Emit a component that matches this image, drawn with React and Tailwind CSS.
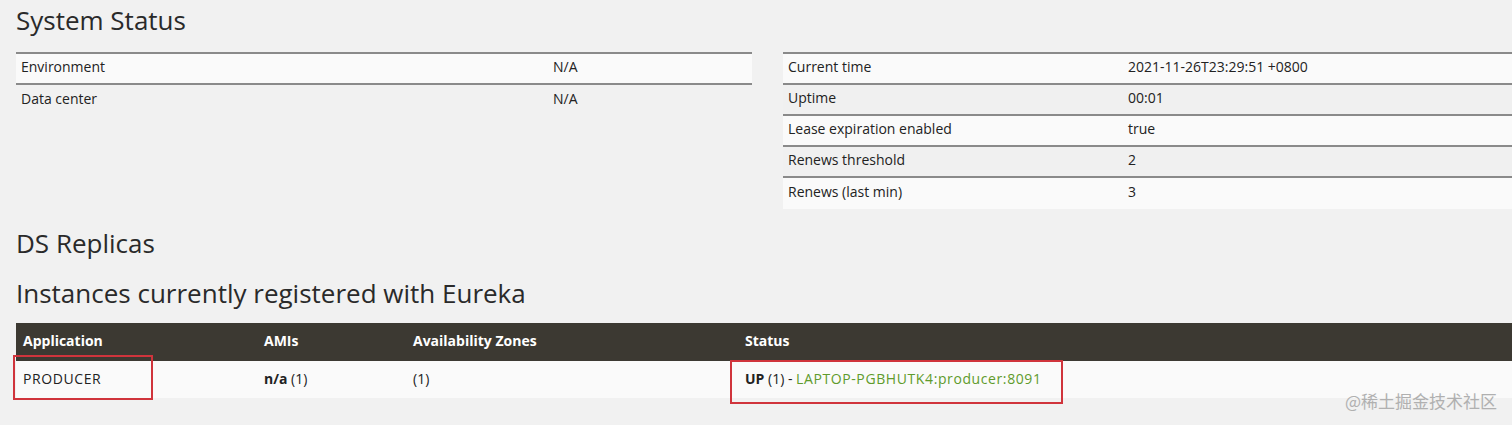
import React from 'react';

const leftRows = [
  ['Environment', 'N/A'],
  ['Data center', 'N/A'],
];

const rightRows = [
  ['Current time', '2021-11-26T23:29:51 +0800'],
  ['Uptime', '00:01'],
  ['Lease expiration enabled', 'true'],
  ['Renews threshold', '2'],
  ['Renews (last min)', '3'],
];

function StatusTable({ rows, labelWidth, striped }) {
  return (
    <div className="border-t-2 border-[#8a8a8a]">
      {rows.map(([k, v], i) => (
        <div
          key={k}
          className={`flex h-[31px] items-center pb-[5px] ${i < rows.length - 1 ? 'border-b-2 border-[#8a8a8a]' : ''} ${
            i % 2 === 0 ? 'bg-[#fafafa]' : striped ? 'bg-[#f0f0f0]' : ''
          }`}
        >
          <div className={`${labelWidth} shrink-0 pl-[5px]`}>{k}</div>
          <div>{v}</div>
        </div>
      ))}
    </div>
  );
}

export default function App() {
  return (
    <div
      className="relative h-[425px] w-[1512px] overflow-hidden bg-[#f1f1f1] text-[14px] text-[#222]"
      style={{ fontFamily: '"Open Sans", "Noto Sans", sans-serif' }}
    >
      <div className="pl-4">
        <h1 className="pt-[4px] text-[26px] leading-[32px] text-[#2a2a2a]">System Status</h1>

        <div className="mt-[16px] grid grid-cols-[736px_736px] gap-x-[31px]">
          <StatusTable rows={leftRows} labelWidth="w-[537px]" />
          <div className="h-[156px]">
            <StatusTable rows={rightRows} labelWidth="w-[345px]" striped />
          </div>
        </div>

        <h2 className="mt-[19px] text-[26px] leading-[32px] text-[#2a2a2a]">DS Replicas</h2>
        <h2 className="mt-[18px] text-[26px] leading-[32px] text-[#2a2a2a]">
          Instances currently registered with Eureka
        </h2>

        <div className="relative mt-[14px]">
          <div className="flex h-[38px] items-center bg-[#3c3932] pb-[3px] font-bold text-white">
            <div className="w-[241px] pl-[7px]">Application</div>
            <div className="w-[149px] pl-[7px]">AMIs</div>
            <div className="w-[332px] pl-[7px]">Availability Zones</div>
            <div className="pl-[7px]">Status</div>
          </div>
          <div className="flex h-[37px] items-center bg-[#fafafa] pb-[2px]">
            <div className="w-[241px] pl-[7px] tracking-[0.6px]">PRODUCER</div>
            <div className="w-[149px] pl-[7px]">
              <b>n/a</b> (1)
            </div>
            <div className="w-[332px] pl-[7px]">(1)</div>
            <div className="pl-[7px]">
              <b>UP</b> (1) -{' '}
              <span className="tracking-[0.6px] text-[#5f9b2c]">LAPTOP-PGBHUTK4:producer:8091</span>
            </div>
          </div>

          <div className="absolute left-[-3px] top-[32px] h-[45px] w-[140px] border-2 border-[#d0343c]" />
          <div className="absolute left-[714px] top-[37px] h-[44px] w-[333px] border-2 border-[#d0343c]" />
        </div>

        <h2 className="mt-[20px] text-[26px] leading-[32px] text-[#2a2a2a]">General Info</h2>
      </div>

      <div
        className="absolute right-[15px] top-[388px] text-[17px] text-[#b0b0b0]"
        style={{ fontFamily: '"Noto Sans CJK SC", sans-serif' }}
      >
        @稀土掘金技术社区
      </div>
    </div>
  );
}
